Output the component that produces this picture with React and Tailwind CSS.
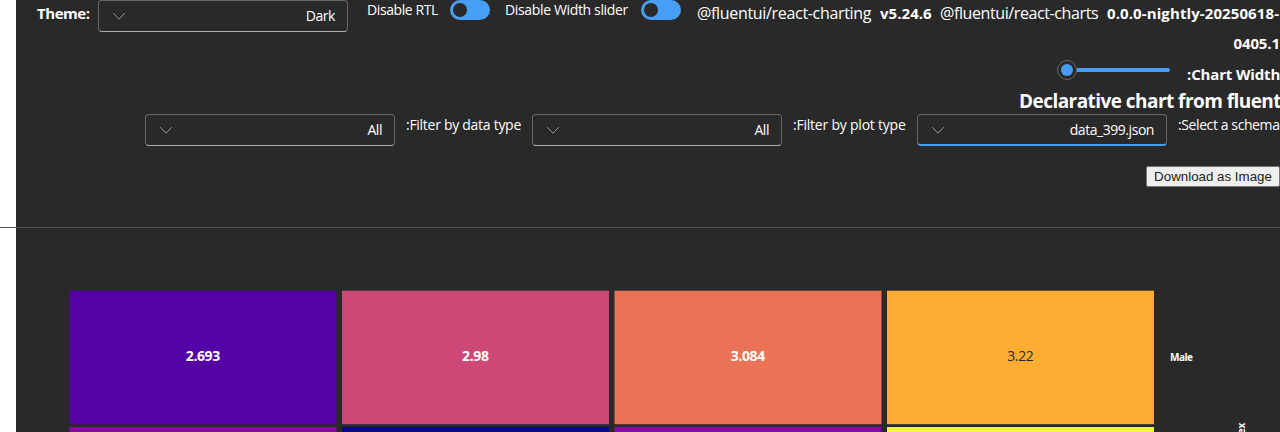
import React from 'react';

function Chevron() {
  return (
    <svg width="20" height="20" viewBox="0 0 20 20" fill="none" stroke="#999999" strokeWidth="1">
      <path d="M4.5 7.5 10 13.2 15.5 7.5" strokeLinecap="round" strokeLinejoin="round" />
    </svg>
  );
}

function Dropdown({ value, active }) {
  return (
    <div
      className={
        'flex h-8 w-[250px] shrink-0 items-center justify-between overflow-hidden rounded border border-[#666666] pr-3 pl-[10px] ' +
        (active ? 'border-b-2 border-b-[#479ef5]' : 'border-b-[#adadad]')
      }
    >
      <Chevron />
      <span className="whitespace-nowrap text-[14px] leading-5 tracking-[-0.45px] text-white">{value}</span>
    </div>
  );
}

function Toggle() {
  return (
    <div className="flex h-5 w-10 shrink-0 items-center rounded-full bg-[#479ef5] pl-[3px]">
      <div className="size-[14px] rounded-full bg-[#292929]" />
    </div>
  );
}

const cells = [
  { x: 69.5, fill: '#5402a3', text: '2.693', below: '#8b0aa5' },
  { x: 342, fill: '#cc4977', text: '2.98', below: '#0d0887' },
  { x: 614.5, fill: '#e97257', text: '3.084', below: '#8b0aa5' },
  { x: 887, fill: '#fdae32', text: '3.22', below: '#f0f921', dark: true },
];

function HeatMap() {
  return (
    <svg className="block" width="1264" height="204" viewBox="16 228 1264 204">
      {cells.map((c) => (
        <g key={c.x}>
          <rect x={c.x} y="290.7" width="267" height="133.5" fill={c.fill} />
          <rect x={c.x} y="427" width="267" height="133.5" fill={c.below} />
          <text
            x={c.x + 133.3}
            y="361"
            textAnchor="middle"
            fontSize="14"
            letterSpacing="-0.4"
            fontWeight={c.dark ? 400 : 700}
            fill={c.dark ? '#292929' : '#ffffff'}
          >
            {c.text}
          </text>
        </g>
      ))}
      <text x="1170" y="361" fontSize="10" fontWeight="700" letterSpacing="-0.5" fill="#ffffff">Male</text>
      <text transform="translate(1244.5 439.5) rotate(-90)" fontSize="10" fontWeight="700" letterSpacing="-0.2" fill="#ffffff">Sex</text>
    </svg>
  );
}

export default function App() {
  return (
    <div className="h-[432px] w-[1280px] overflow-hidden bg-white font-['Open_Sans','Noto_Sans',sans-serif] text-white">
      <div className="ml-4 h-[227px] bg-[#292929]">
        <div className="flex h-[60px] items-start">
          <span className="ml-[21px] w-[61px] whitespace-nowrap text-[15px] leading-[26px] font-bold tracking-[-0.45px]">Theme:</span>
          <Dropdown value="Dark" />
          <span className="ml-[19px] w-[83px] whitespace-nowrap text-[14px] leading-5 font-medium tracking-[-0.4px]">Disable RTL</span>
          <Toggle />
          <span className="ml-[15px] w-[136px] whitespace-nowrap text-[14px] leading-5 font-medium tracking-[-0.35px]">Disable Width slider</span>
          <Toggle />
          <span className="ml-4 w-[183px] whitespace-nowrap text-[16px] leading-[26px] tracking-[-0.32px]">@fluentui/react-charting</span>
          <span className="w-[60px] whitespace-nowrap text-[15px] leading-[26px] font-bold tracking-[0.05px]">v5.24.6</span>
          <span className="w-[167px] whitespace-nowrap text-[16px] leading-[26px] tracking-[-0.4px]">@fluentui/react-charts</span>
          <span className="flex w-[173px] flex-col text-[15px] leading-[30px] font-bold tracking-[0.1px]">
            <span className="-mt-[2px] whitespace-nowrap">0.0.0-nightly-20250618-</span>
            <span className="self-end whitespace-nowrap tracking-[-0.1px]">0405.1</span>
          </span>
        </div>
        <div className="flex h-[29px] items-start justify-end">
          <div className="mr-[17px] flex h-5 w-[113px] items-center">
            <div className="flex size-5 shrink-0 items-center justify-center rounded-full border border-[#666666]">
              <div className="size-3 rounded-full bg-[#479ef5]" />
            </div>
            <div className="h-1 flex-1 rounded-r-full bg-[#479ef5]" />
          </div>
          <span className="w-[93px] whitespace-nowrap text-[15px] leading-[29px] font-bold tracking-[-0.15px]">:Chart Width</span>
        </div>
        <div className="flex h-[25px] justify-end">
          <span className="w-[261px] whitespace-nowrap text-[19px] leading-[24px] font-bold tracking-[-0.55px]">Declarative chart from fluent</span>
        </div>
        <div className="flex h-[52px] items-start pl-[129px]">
          <Dropdown value="All" />
          <span className="ml-[11px] w-[126px] whitespace-nowrap text-[14px] leading-[21px] font-medium tracking-[-0.28px]">:Filter by data type</span>
          <Dropdown value="All" />
          <span className="ml-[11px] w-[124px] whitespace-nowrap text-[14px] leading-[21px] font-medium tracking-[-0.22px]">:Filter by plot type</span>
          <Dropdown value="data_399.json" active />
          <span className="ml-[11px] w-[102px] whitespace-nowrap text-[14px] leading-[21px] font-medium tracking-[-0.4px]">:Select a schema</span>
        </div>
        <div className="flex justify-end">
          <button className="h-[21px] w-[134px] whitespace-nowrap rounded-[2px] border border-[#767676] bg-[#efefef] font-['Liberation_Sans',sans-serif] text-[13.333px] leading-[18px] text-[#222222]">
            Download as Image
          </button>
        </div>
      </div>
      <div className="h-px bg-[#525252]" />
      <div className="ml-4 h-[204px] bg-[#292929]">
        <HeatMap />
      </div>
    </div>
  );
}
